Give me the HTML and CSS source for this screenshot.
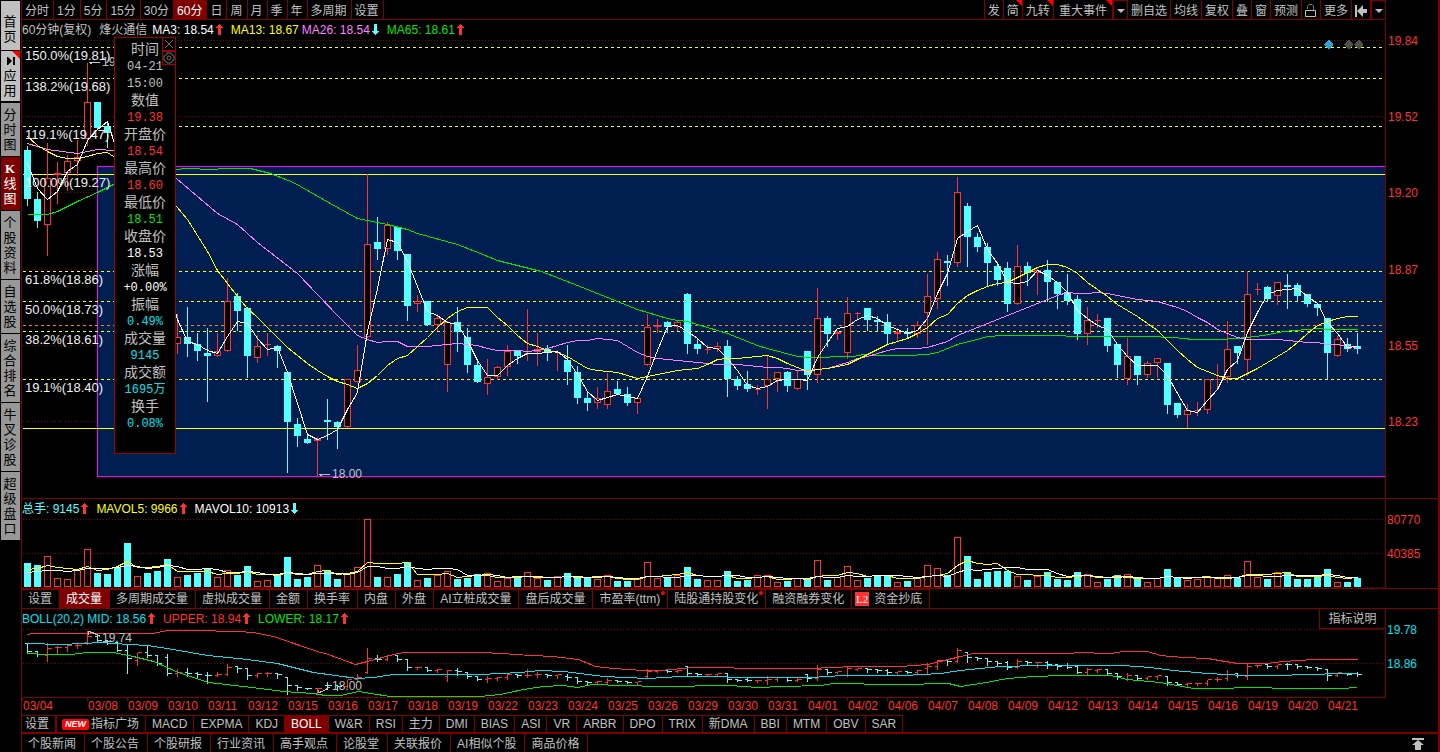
FILE: index.html
```html
<!DOCTYPE html>
<html lang="zh-CN">
<head>
<meta charset="utf-8">
<title>烽火通信 60分钟K线</title>
<link rel="stylesheet" href="styles.css">
</head>
<body>
<svg class="defs" aria-hidden="true">
  <symbol id="up" viewBox="0 0 7 11"><path d="M3 0h1v1h1v1h1v1h1v1H5v7H2V4H0V3h1V2h1V1h1z"/></symbol>
  <symbol id="down" viewBox="0 0 7 11"><path d="M2 0h3v7h2v1H6v1H5v1H4v1H3v-1H2V9H1V8H0V7h2z"/></symbol>
</svg>
<div class="app">
  <nav class="side">
    <button class="light home">首页</button>
    <button class="light apps"><svg class="play" viewBox="0 0 8 8" aria-hidden="true"><path d="M0 0h1l4 4-4 4H0zM6 0h2v8H6z"/></svg>应用</button>
    <button>分时图</button>
    <button class="on"><b>K</b>线图</button>
    <button>个股资料</button>
    <button>自选股</button>
    <button>综合排名</button>
    <button>牛叉诊股</button>
    <button>超级盘口</button>
  </nav>
  <main class="main">
    <header class="top">
      <div class="periods">
        <button>分时</button><button>1分</button><button>5分</button><button>15分</button><button>30分</button><button class="on">60分</button><button>日</button><button>周</button><button>月</button><button>季</button><button>年</button><button>多周期</button><button>设置</button>
      </div>
      <div class="tools">
        <button>发</button><button class="new">简</button><button class="new">九转</button><button class="new wide">重大事件</button><button class="drop" aria-label="展开事件"><svg viewBox="0 0 8 4"><path d="M0 0h8L4 4z"/></svg></button><button>删自选</button><button>均线</button><button>复权</button><button>叠</button><button>窗</button><button>预测</button><button aria-label="锁定"><svg class="lock" viewBox="0 0 12 14"><path d="M.5 6.500h10v6H.5z"/><path class="shackle" d="M2.500 5V2.500L4 .5h3L8.500 2v4"/></svg></button><button>更多</button><button aria-label="收起"><svg class="back" viewBox="0 0 12 12"><path d="M0 0h2v12H0zM2 6l6-6v4h4v4H8v4z"/></svg></button><button class="drop" aria-label="展开"><svg viewBox="0 0 8 4"><path d="M0 0h8L4 4z"/></svg></button>
      </div>
    </header>

    <section class="panel">
      <svg id="kline" class="plot" viewBox="22 20 1416 478" role="img" aria-label="60分钟K线图"></svg>
      <p class="legend">
        <span class="gray">60分钟(复权)</span><span class="gray name">烽火通信</span>
        <span class="white">MA3: 18.54<svg class="up"><use href="#up"/></svg></span>
        <span class="yellow ma13">MA13: 18.67</span>
        <span class="pink ma26">MA26: 18.54<svg class="down"><use href="#down"/></svg></span>
        <span class="green">MA65: 18.61<svg class="up"><use href="#up"/></svg></span>
      </p>
      <aside class="quote">
        <div class="quote-tools">
          <button aria-label="关闭"><svg viewBox="0 0 12 12"><path d="M2 2l8 8M10 2l-8 8"/></svg></button>
          <button aria-label="设置"><svg viewBox="0 0 12 12"><path d="M4 1h4l1 2 2 1v4l-2 1-1 2H4L3 9 1 8V4l2-1z"/><circle cx="6" cy="6" r="2"/></svg></button>
        </div>
        <dl>
          <dt>时间</dt><dd>04-21</dd><dd>15:00</dd>
          <dt>数值</dt><dd class="red">19.38</dd>
          <dt>开盘价</dt><dd class="red">18.54</dd>
          <dt>最高价</dt><dd class="red">18.60</dd>
          <dt>最低价</dt><dd class="green">18.51</dd>
          <dt>收盘价</dt><dd class="white">18.53</dd>
          <dt>涨幅</dt><dd class="white">+0.00%</dd>
          <dt>振幅</dt><dd class="blue">0.49%</dd>
          <dt>成交量</dt><dd class="blue">9145</dd>
          <dt>成交额</dt><dd class="blue">1695万</dd>
          <dt>换手</dt><dd class="blue">0.08%</dd>
        </dl>
      </aside>
    </section>

    <section class="panel">
      <svg id="volume" class="plot" viewBox="22 499 1416 89" role="img" aria-label="成交量"></svg>
      <p class="legend">
        <span class="cyan">总手: 9145<svg class="up"><use href="#up"/></svg></span>
        <span class="yellow">MAVOL5: 9966<svg class="up"><use href="#up"/></svg></span>
        <span class="white">MAVOL10: 10913<svg class="down"><use href="#down"/></svg></span>
      </p>
    </section>

    <nav class="tabs volume-tabs">
      <button>设置</button><button class="on">成交量</button><button>多周期成交量</button><button>虚拟成交量</button><button>金额</button><button>换手率</button><button>内盘</button><button>外盘</button><button>AI立桩成交量</button><button>盘后成交量</button><button class="dot">市盈率(ttm)</button><button class="dot">陆股通持股变化</button><button>融资融券变化</button><button class="level2"><i>L2</i>资金抄底</button>
    </nav>

    <section class="panel boll">
      <svg id="boll" class="plot" viewBox="22 609 1416 92" role="img" aria-label="BOLL指标"></svg>
      <p class="legend">
        <span class="blue">BOLL(20,2) MID: 18.56<svg class="up"><use href="#up"/></svg></span>
        <span class="red">UPPER: 18.94<svg class="up"><use href="#up"/></svg></span>
        <span class="green">LOWER: 18.17<svg class="up"><use href="#up"/></svg></span>
      </p>
      <button class="explain">指标说明</button>
    </section>
    <div id="dates" class="dates"></div>

    <nav class="tabs indicator-tabs">
      <button class="setup">设置</button><button class="market"><i>NEW</i>指标广场</button><button>MACD</button><button>EXPMA</button><button>KDJ</button><button class="on">BOLL</button><button>W&amp;R</button><button>RSI</button><button>主力</button><button>DMI</button><button>BIAS</button><button>ASI</button><button>VR</button><button>ARBR</button><button>DPO</button><button>TRIX</button><button>新DMA</button><button>BBI</button><button>MTM</button><button>OBV</button><button>SAR</button>
    </nav>
    <footer class="tabs info-tabs">
      <button>个股新闻</button><button>个股公告</button><button>个股研报</button><button>行业资讯</button><button>高手观点</button><button>论股堂</button><button>关联报价</button><button>AI相似个股</button><button>商品价格</button>
      <button class="totop" aria-label="展开面板"><svg viewBox="0 0 12 12"><path d="M0 0h12v2H0zM6 2l6 5H9v5H3V7H0z"/></svg></button>
    </footer>
  </main>
</div>
<script src="chart.js"></script>
</body>
</html>
```
FILE: styles.css
```css
* { box-sizing: border-box; }

body {
  margin: 0;
  background: #000;
  color: #c0c0c0;
  font: 12px/18px "Liberation Sans", "Noto Sans CJK SC", sans-serif;
}

button {
  margin: 0;
  padding: 0;
  border: 0;
  background: none;
  color: inherit;
  font: inherit;
  white-space: nowrap;
}

.defs { position: absolute; width: 0; height: 0; }

.app { display: flex; min-height: 100vh; }

/* left rail */
.side {
  display: flex;
  flex-direction: column;
  gap: 1px;
  width: 21px;
  padding: 1px 0 0 1px;
  flex: none;
}
.side button {
  width: 19px;
  padding: 4px 3px 4px 2px;
  background: #989898;
  color: #000;
  font-size: 13px;
  line-height: 15px;
  white-space: normal;
  word-break: break-all;
  text-align: center;
}
.side .light { background: #c0c0c0; position: relative; }
.side .home { height: 49px; padding-top: 10px; }
.side .apps { height: 50px; margin-bottom: 1px; }
.side .apps::after {
  content: "";
  position: absolute;
  top: 0;
  right: 0;
  border: 4px solid;
  border-color: #f00 #f00 transparent transparent;
}
.side .on { background: #800000; color: #fff; }
.side b { display: block; font-family: "Liberation Serif", serif; }
.play { display: block; width: 8px; height: 8px; margin: 2px 0 3px 4px; }

.main {
  flex: 1;
  min-width: 0;
  border-left: 1px solid #800000;
  border-right: 2px solid #800000;
}

/* top bar */
.top {
  display: flex;
  justify-content: space-between;
  margin-right: 52px;
  border-bottom: 1px solid #800000;
  line-height: 19px;
}
.periods, .tools { display: flex; }
.top button {
  height: 19px;
  padding: 2px 4px 0 3px;
  border-right: 1px solid #800000;
}
.tools button { position: relative; padding: 2px 3px 0; }
.tools button:first-child { border-left: 1px solid #800000; }
.top .wide { padding: 2px 5px 0; }
.top .on { background: #800000; color: #fff; }
.top .drop { width: 15px; border-left: 1px solid #800000; border-top: 1px solid #800000; }
.top .new::after {
  content: "";
  position: absolute;
  top: 0;
  right: 0;
  border: 3px solid;
  border-color: #f00 #f00 transparent transparent;
}
.tools svg { display: block; fill: #c0c0c0; margin: 0 auto; }
.drop svg { width: 8px; height: 4px; }
.tools .lock { width: 12px; height: 14px; fill: none; stroke: #c0c0c0; }
.tools .shackle { stroke: #808080; }
.tools .back { width: 12px; height: 12px; }

/* chart panels */
.panel { position: relative; border-bottom: 1px solid #800000; }
.boll { border-bottom: 0; }
.plot { display: block; width: 100%; height: auto; }
.plot text { font: 12px "Liberation Sans", sans-serif; }
.plot .level { font-size: 13px; }
.plot path, .plot rect { shape-rendering: crispEdges; }

.legend {
  position: absolute;
  top: 1px;
  left: 0;
  display: flex;
  gap: 8px;
  margin: 0;
  white-space: nowrap;
}
.legend svg { width: 7px; height: 11px; margin-left: 2px; vertical-align: -1px; }
.legend .name { margin-right: -3px; }
.legend .ma13 { margin-right: -5px; }
.up { fill: #ff3232; }
.down { fill: #54ffff; }
.gray { color: #c0c0c0; }
.white { color: #fff; }
.yellow { color: #ff0; }
.pink { color: #ff80ff; }
.green { color: #00e600; }
.cyan { color: #54ffff; }
.blue { color: #00e1f0; }
.red { color: #ff3232; }

.quote {
  position: absolute;
  top: 17px;
  left: 92px;
  width: 62px;
  height: 417px;
  padding-top: 3px;
  border: 1px solid #a00000;
  background: #000;
}
.quote dl { margin: 0; text-align: center; }
.quote dt, .quote dd { margin: 0; height: 17px; line-height: 17px; }
.quote dt { font-size: 14px; }
.quote dd { font-family: "Liberation Mono", "Noto Sans CJK SC", monospace; line-height: 19px; }
.quote-tools { position: absolute; top: -1px; right: -1px; width: 14px; }
.quote-tools button { display: block; width: 14px; height: 14px; border: 1px solid #a00000; background: #000; }
.quote-tools svg { display: block; width: 12px; height: 12px; fill: none; stroke: #707070; }

.explain {
  position: absolute;
  top: 0;
  right: 52px;
  width: 67px;
  height: 20px;
  border: 1px solid #800000;
  border-top: 0;
  background: #000;
}

.dates {
  display: grid;
  grid-template-columns: 65fr repeat(31, 40fr) 111fr;
  height: 14px;
  line-height: 11px;
  color: #ff3232;
}
.dates span { padding-left: 1px; }

/* tab strips */
.tabs { display: flex; }
.tabs button {
  position: relative;
  padding: 0 7px 0 6px;
  border-right: 1px solid #800000;
}
.tabs .on { background: #800000; color: #fff; }
.volume-tabs { border-bottom: 1px solid #800000; height: 20px; }
.volume-tabs button { border-top: 1px solid #800000; }
.volume-tabs .dot::after {
  content: "";
  position: absolute;
  top: 1px;
  right: 2px;
  width: 4px;
  height: 4px;
  border-radius: 2px;
  background: #f00;
}
.tabs .level2 { display: flex; align-items: center; gap: 5px; padding-left: 3px; }
.level2 i { width: 14px; height: 14px; background: #ff3232; color: #fff; font: 11px/14px "Liberation Serif", serif; }
.indicator-tabs { height: 19px; border-bottom: 2px solid #800000; }
.indicator-tabs button { padding: 0 6px; border-top: 1px solid #800000; line-height: 16px; }
.indicator-tabs .setup { padding: 0 6px 0 3px; }
.indicator-tabs .market { display: flex; align-items: center; gap: 2px; padding: 0 6px 0 5px; border-left: 1px solid #800000; }
.market i { width: 27px; height: 11px; border-radius: 2px; background: #f00; color: #fff; font: italic bold 9px/11px "Liberation Sans", sans-serif; }
.info-tabs { height: 19px; }
.info-tabs button { padding: 0 8px 0 6px; }
.info-tabs .totop { margin-left: auto; padding: 0 14px 0 0; border: 0; }
.totop svg { display: block; width: 12px; height: 12px; fill: #c0c0c0; }
```
FILE: chart.js
```js
// One row per bar: direction, high, body top, body bottom, low (plot units), volume bar top.
const rows = `
c 145 150 199 205 563|c 191 199 221 227 565|r 142 178 225 255 556|r 161 173 175 203 578|r 154 161 173 190 579
r 139 157 161 175 569|r 62 102 139 145 549|c 102 102 128 128 573|c 122 126 133 147 574|c 140 140 195 195 567
c 147 195 247 336 543|r 206 206 256 284 576|c 153 206 225 232 573|c 219 225 278 284 571|c 212 240 343 350 559
r 313 337 344 353 577|c 306 337 344 356 575|c 332 344 351 360 573|c 327 353 356 401 569|r 332 351 356 356 577
r 277 301 351 351 570|c 292 296 311 330 575|c 306 308 356 377 566|r 334 346 358 362 581|r 332 344 345 355 580
c 344 346 351 367 575|c 372 372 422 472 557|c 417 424 436 446 579|c 432 439 443 443 577|r 436 439 441 475 565
c 398 420 422 439 570|c 420 422 427 448 579|r 379 379 427 427 573|r 344 370 382 382 567|r 173 244 337 337 519
c 216 242 249 259 577|r 221 225 249 254 577|c 227 227 251 259 574|c 254 254 306 320 562|r 294 301 304 311 580
c 301 301 325 325 578|r 313 318 325 330 575|r 320 322 365 391 571|c 306 322 332 351 579|c 327 337 365 372 578
c 360 365 382 382 574|r 358 377 384 394 573|r 365 367 377 379 581|r 344 351 367 375 578|c 349 351 356 363 577
r 308 353 354 360 572|r 332 349 352 365 578|c 344 349 353 360 580|r 349 352 353 370 576|c 344 360 372 384 573
c 365 372 398 403 576|c 391 398 403 410 578|r 386 398 403 408 579|r 372 391 405 408 575|c 380 389 394 394 581
c 386 394 403 405 581|r 396 398 403 413 579|r 313 327 365 365 562|r 318 325 327 332 578|c 320 322 327 332 577
r 320 322 327 330 575|c 292 294 344 353 567|c 337 344 349 353 579|r 344 349 350 353 580|r 341 346 349 351 580
c 339 346 379 396 571|c 375 379 386 389 581|c 370 384 389 391 580|r 384 389 390 394 575|r 355 379 386 408 575
r 372 372 379 391 582|c 370 372 386 391 581|r 370 379 389 389 578|c 351 351 375 389 578|r 287 318 375 382 560
c 315 318 334 346 580|r 330 332 334 339 577|r 296 313 353 358 566|r 311 313 314 319 580|c 308 308 320 330 578
c 315 320 322 330 576|c 313 322 334 344 575|r 327 332 334 341 582|c 327 332 334 338 581|r 320 325 334 337 578
r 273 296 313 344 565|r 251 259 299 308 568|c 254 261 263 285 575|r 176 192 263 266 537|c 202 206 237 266 556
c 232 237 247 251 579|c 242 247 263 285 572|c 261 266 280 285 571|c 261 268 304 311 571|r 244 266 304 304 576
c 261 266 273 285 580|r 268 270 273 294 576|c 259 270 282 301 572|c 282 282 294 308 579|c 273 292 301 304 580
c 294 299 334 339 572|r 306 320 334 344 574|r 313 320 321 327 582|c 318 318 346 351 579|c 344 344 365 377 575
r 337 356 379 384 574|c 356 356 375 384 579|r 360 363 375 377 582|r 358 358 363 377 578|c 363 363 405 413 569
c 403 403 415 417 578|r 403 410 415 427 580|r 401 410 411 415 579|r 379 379 410 413 576|r 363 379 380 389 578
r 320 349 377 382 575|c 346 346 353 363 578|r 270 294 360 375 561|r 282 289 290 294 577|c 285 287 299 301 579
r 282 282 296 304 572|c 273 285 287 308 572|c 282 285 296 301 579|c 294 294 304 306 579|c 303 304 308 315 576
c 318 318 353 379 569|r 335 339 356 356 582|c 337 344 349 351 582|c 332 346 349 353 578
`.trim().split(/[|\n]/).map(r => {
  const [kind, ...n] = r.split(" ");
  const [high, top, bottom, low, vol] = n.map(Number);
  return { up: kind === "r", high, top, bottom, low, vol, close: kind === "r" ? top : bottom };
});

const RED = "#ff3232", CYAN = "#54ffff", GRID = "#800000";
const cx = i => 27 + 10 * i;
const path = (d, stroke, extra = "") =>
  `<path transform="translate(.5 .5)" d="${d}" fill="none" stroke="${stroke}" ${extra}/>`;
const hline = (y, stroke, extra) => path(`M22 ${y}H1384`, stroke, extra);
const dotted = y => hline(y, GRID, 'stroke-dasharray="1 2"');
const text = (x, y, s, fill, extra = "") => `<text x="${x}" y="${y}" fill="${fill}" ${extra}>${s}</text>`;
const poly = (pts, stroke) =>
  path("M" + pts.map(p => `${p[0]} ${Math.round(p[1])}`).join("L"), stroke);
const parse = s => s.split(" ").map(p => p.split(",").map(Number));

// Moving average from bar `from`; bars before the first one count as `pad`.
function average(values, n, from, pad) {
  const out = [];
  for (let i = from; i < values.length; i++) {
    let sum = 0;
    for (let k = i - n + 1; k <= i; k++) sum += k < 0 ? pad : values[k];
    out.push([cx(i), sum / n]);
  }
  return out;
}

function drawKline() {
  const closes = rows.map(r => r.close);
  let s = [40, 116, 192, 269, 345, 421].map(dotted).join("");
  s += '<rect x="97" y="166" width="1288" height="311" fill="#001e50"/>';
  s += path("M1384 166H97V476H1384", "#f0f");
  s += [47, 78, 126, 271, 301, 331, 379].map(y => hline(y, "#ff0", 'stroke-dasharray="3 3"')).join("");
  s += hline(325, "#ff8020", 'stroke-dasharray="3 3"') + hline(174, "#ff0") + hline(428, "#ff0");
  rows.forEach((r, i) => {
    const x = cx(i);
    if (r.up) {
      s += path(`M${x} ${r.high}V${r.top}M${x} ${r.bottom - 1}V${r.low}`, RED);
      s += `<path transform="translate(.5 .5)" d="M${x - 3} ${r.top}h6V${r.bottom - 1}h-6z" stroke="${RED}"/>`;
    } else {
      s += path(`M${x} ${r.high}V${r.low}`, CYAN);
      s += `<rect x="${x - 3}" y="${r.top}" width="7" height="${r.bottom - r.top}" fill="${CYAN}"/>`;
    }
  });
  s += poly(parse("27,214 47,214 57,211 77,201 97,192 113,184 176,169 185,168 213,169 222,168 250,168 270,173 293,182 307,190 337,207 357,218 367,220 387,224 407,229 417,233 457,244 480,253 497,260 517,265 541,271 577,285 617,301 637,309 667,318 677,320 687,321 727,333 757,345 767,348 797,356 807,357 853,356 863,354 873,355 907,355 927,354 937,352 947,348 960,343 973,340 987,336 1003,335 1027,335 1103,336 1147,336 1173,337 1193,339 1220,339 1247,337 1263,335 1283,331 1307,329 1318,328 1327,329 1357,329"), "#00e600");
  s += poly([...parse("27,143 47,149 77,153 97,149 113,150 176,178 217,213 237,224 257,242 297,273 337,315 357,335 367,339 377,342 387,341 397,341 407,346 427,346"), ...average(closes, 26, 41, 0)], "#ff80ff");
  s += poly([...parse("27,136 37,145 47,151 57,156 67,158 77,158 87,156 97,153 107,152 113,156 176,206 187,219 197,235 207,251 217,270 227,283 237,296 247,308 257,317 267,327 277,337 287,347 297,355 307,363 317,370 327,376 337,381 347,384 357,388"), ...average(closes, 13, 34, 0)], "#ff0");
  s += poly(average(closes, 3, 0, 145), "#fff");
  [["150.0%(19.81)", 60], ["138.2%(19.68)", 91], ["119.1%(19.47)", 139], ["100.0%(19.27)", 187], ["61.8%(18.86)", 284], ["50.0%(18.73)", 314], ["38.2%(18.61)", 344], ["19.1%(18.40)", 392]]
    .forEach(([t, y]) => { s += text(25, y, t, "#f0f0f0", 'class="level"'); });
  s += path("M88 62H99M90 61v2M91 61v2M318 474H329M320 473v2M321 473v2", "#c0c0c0");
  s += text(102, 66, "19", "#c0c0c0") + text(332, 478, "18.00", "#c0c0c0");
  [[1328, "#30a0d8"], [1348, "#505050"], [1358, "#505050"]].forEach(([x, c]) => {
    s += `<path d="M${x} 40h1l4 4v1l-4 4h-1l-4-4v-1z" fill="${c}"/>`;
  });
  s += path("M1385 20V498", GRID);
  ["19.84", "19.52", "19.20", "18.87", "18.55", "18.23"].forEach((t, i) => {
    s += text(1388, 45 + Math.round(i * 76.2), t, RED);
  });
  document.getElementById("kline").innerHTML = s;
}

function drawVolume() {
  const vols = rows.map(r => r.vol);
  let s = [519, 553, 587].map(dotted).join("");
  rows.forEach((r, i) => {
    const x = cx(i) - 3;
    s += r.up
      ? `<path transform="translate(.5 .5)" d="M${x} ${r.vol}h6V586h-6z" stroke="${RED}"/>`
      : `<rect x="${x}" y="${r.vol}" width="7" height="${587 - r.vol}" fill="${CYAN}"/>`;
  });
  s += poly(average(vols, 5, 0, 571), "#ff0") + poly(average(vols, 10, 0, 573), "#fff");
  s += path("M1385 499V588", GRID) + text(1387, 524, "80770", RED) + text(1387, 558, "40385", RED);
  document.getElementById("volume").innerHTML = s;
}

function drawBoll() {
  const y = v => Math.round(647 + (v - 173) * 0.153);
  let s = dotted(629) + dotted(663);
  rows.forEach((r, i) => {
    const x = cx(i), open = r.up ? r.bottom : r.top;
    s += path(`M${x} ${y(r.high)}V${y(r.low) + 1}M${x - 3} ${y(open)}h3M${x} ${y(r.close)}h4`, r.up ? RED : CYAN);
  });
  s += poly(parse("27,634 33,633 152,633 167,630 213,630 218,631 238,631 253,632 273,636 317,651 328,654 355,664 367,661 393,654 403,652 480,652 503,653 513,654 552,656 578,659 595,666 613,668 643,670 660,670 693,667 730,667 737,668 810,668 853,666 900,666 927,664 940,661 960,656 973,653 1070,653 1077,652 1110,653 1123,651 1147,651 1160,655 1183,657 1207,658 1237,663 1267,663 1283,661 1313,659 1357,659"), RED);
  s += poly(parse("27,643 62,644 102,642 113,643 147,645 173,649 207,655 247,659 277,663 313,672 357,678 373,677 393,674 480,674 520,672 540,670 563,671 603,676 647,678 680,676 720,676 733,677 810,677 843,675 903,675 940,673 960,670 980,668 1000,666 1040,665 1123,665 1150,667 1173,670 1207,673 1243,675 1290,675 1293,674 1357,673"), "#00e1f0");
  s += poly(parse("27,653 47,654 70,654 87,652 113,652 133,656 153,661 178,672 208,682 243,686 283,691 313,693 325,695 340,695 358,691 370,693 390,696 480,696 500,694 523,689 543,686 563,685 577,687 592,684 623,685 660,686 730,685 757,687 783,686 820,685 833,683 860,683 867,684 920,684 927,683 948,683 960,686 980,683 1007,678 1033,676 1063,675 1110,675 1127,679 1160,682 1193,688 1230,688 1237,687 1270,687 1273,688 1340,688 1357,687"), "#00e600");
  s += path("M88 631l4 1l8 4M88 631v3M330 686l-8 5l-4 1M318 692v-3", "#c0c0c0");
  s += text(102, 642, "19.74", "#c0c0c0") + text(332, 690, "18.00", "#c0c0c0");
  let ticks = "M22 697H1385V609M22 697v3";
  for (let x = 87; x < 1360; x += 40) ticks += `M${x} 697v3`;
  s += path(ticks, GRID) + text(1387, 634, "19.78", "#00e1f0") + text(1387, 668, "18.86", "#00e1f0");
  document.getElementById("boll").innerHTML = s;
}

function drawDates() {
  const months = { "03": "04 08 09 10 11 12 15 16 17 18 19 22 23 24 25 26 29 30 31", "04": "01 02 06 07 08 09 12 13 14 15 16 19 20 21" };
  document.getElementById("dates").innerHTML = Object.keys(months).sort()
    .flatMap(m => months[m].split(" ").map(d => `<span>${m}/${d}</span>`)).join("");
}

drawKline();
drawVolume();
drawBoll();
drawDates();
```
